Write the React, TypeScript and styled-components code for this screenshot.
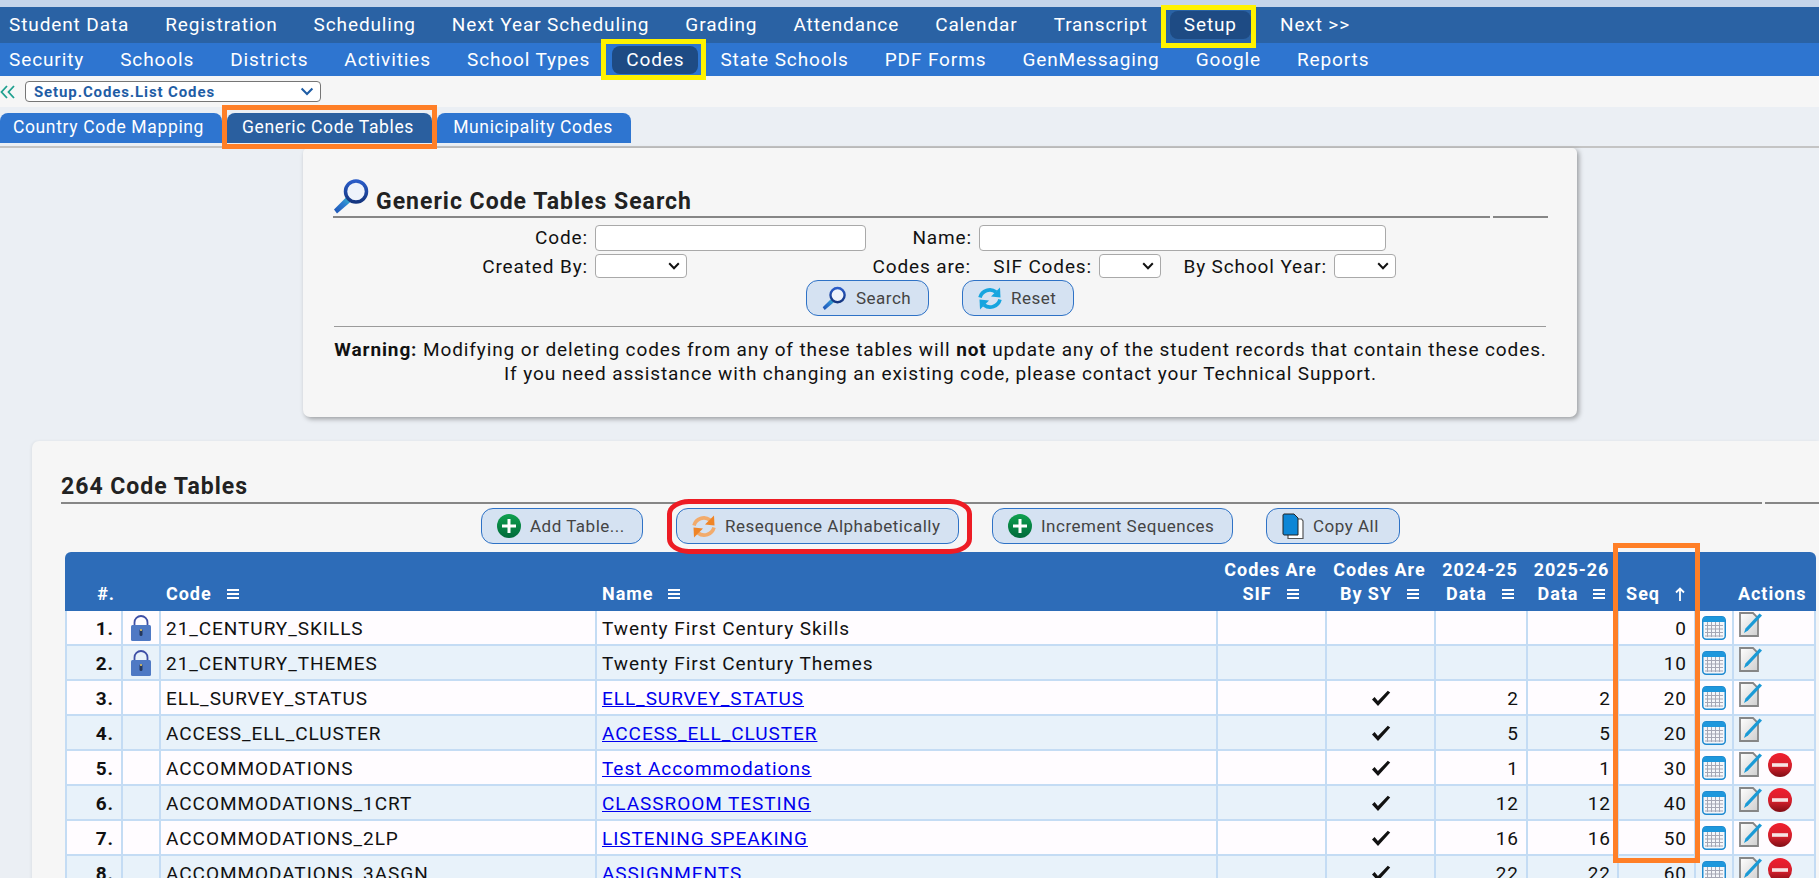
import React from "react";
import styled, { createGlobalStyle } from "styled-components";

const Global = createGlobalStyle`
  html, body { margin: 0; padding: 0; height: 100%; overflow: hidden; background: #ebeff4; }
  body { font-family: Roboto, "Liberation Sans", sans-serif; color: #111; }
  * { box-sizing: border-box; }
  td svg { vertical-align: middle; }
`;

const Page = styled.div`
  position: relative;
  width: 1819px;
  height: 878px;
  overflow: hidden;
  background: #ebeff4;
`;

const TopStrip = styled.div`
  height: 7px;
  background: #c5d5ea;
`;

const NavBar = styled.nav<{ $sub?: boolean }>`
  display: flex;
  align-items: center;
  height: ${(p) => (p.$sub ? 33 : 36)}px;
  padding-left: 9px;
  gap: 8px;
  background: ${(p) => (p.$sub ? "#2e75d0" : "#2a62a4")};
`;

const NavItem = styled.a<{ $active?: boolean; $ml?: number }>`
  display: block;
  margin-left: ${(p) => p.$ml ?? 0}px;
  padding: 0 14px;
  height: 28px;
  line-height: 28px;
  font-size: 19px;
  letter-spacing: 0.89px;
  color: #fff;
  border-radius: 8px;
  background: ${(p) => (p.$active ? "#1e4b84" : "transparent")};
  &:first-child { padding-left: 0; }
`;

const CrumbBar = styled.div`
  display: flex;
  align-items: center;
  height: 31px;
  background: #f6f6f6;
`;

const BackMark = styled.svg`
  width: 16px;
  height: 14px;
  margin-right: 9px;
  flex: none;
`;

const CrumbSelect = styled.div`
  display: flex;
  align-items: center;
  justify-content: space-between;
  width: 296px;
  height: 21px;
  padding: 0 6px 0 8px;
  border: 1px solid #767676;
  border-radius: 4px;
  background: #fff;
  color: #1f5da5;
  font-size: 15px;
  font-weight: 700;
  letter-spacing: 0.88px;
`;

const TabStrip = styled.div`
  display: flex;
  align-items: flex-end;
  gap: 5px;
  height: 41px;
  padding: 6px 0 0;
  border-bottom: 2px solid #c4c4c4;
  & > div { margin-bottom: 3px; }
`;

const Tab = styled.div<{ $active?: boolean; $w: number; $pr: number }>`
  width: ${(p) => p.$w}px;
  height: 30px;
  padding-right: ${(p) => p.$pr}px;
  line-height: 29px;
  text-align: center;
  font-size: 17.5px;
  letter-spacing: 0.65px;
  color: #fff;
  border-radius: 8px 8px 0 0;
  background: ${(p) => (p.$active ? "#2a5f9f" : "#2e75d0")};
`;

const SearchCard = styled.section`
  width: 1274px;
  height: 269px;
  margin-left: 303px;
  padding: 31px 29px 0 30px;
  background: #f6f6f6;
  border-radius: 5px 5px 7px 7px;
  box-shadow: 2px 2px 5px rgba(0, 0, 0, 0.35);
`;

const TitleRow = styled.div`
  display: flex;
  align-items: flex-end;
  gap: 6px;
  height: 37px;
  padding-bottom: 1px;
`;

const SectionTitle = styled.h2`
  margin: 0;
  font-size: 23px;
  line-height: 27px;
  font-weight: 700;
  letter-spacing: 1px;
  color: #222;
`;

const SplitRule = styled.div`
  display: flex;
  gap: 3px;
  height: 2px;
  & > i { display: block; flex: none; height: 2px; background: #868686; }
`;

const FormRow = styled.div<{ $h: number; $mt?: number; $mb?: number }>`
  display: flex;
  align-items: center;
  height: ${(p) => p.$h}px;
  margin-top: ${(p) => p.$mt ?? 0}px;
  margin-bottom: ${(p) => p.$mb ?? 0}px;
  font-size: 19px;
  letter-spacing: 0.87px;
  color: #111;
`;

const Label = styled.label<{ $w: number }>`
  display: block;
  flex: none;
  width: ${(p) => p.$w}px;
  margin-right: 7px;
  text-align: right;
  white-space: nowrap;
`;

const TextInput = styled.div<{ $w: number }>`
  flex: none;
  width: ${(p) => p.$w}px;
  height: 26px;
  border: 1px solid #a9a9a9;
  border-radius: 4px;
  background: #fff;
`;

const SmallSelect = styled.div<{ $w: number }>`
  display: flex;
  flex: none;
  align-items: center;
  justify-content: flex-end;
  width: ${(p) => p.$w}px;
  height: 24px;
  padding-right: 6px;
  border: 1px solid #a9a9a9;
  border-radius: 4px;
  background: #fff;
`;

const ButtonRow = styled.div<{ $pl?: number; $center?: boolean }>`
  display: flex;
  gap: 33px;
  height: 36px;
  padding-left: ${(p) => p.$pl ?? 0}px;
  ${(p) => (p.$center ? "justify-content: center;" : "")}
`;

const Btn = styled.button<{ $w: number }>`
  display: flex;
  flex: none;
  align-items: center;
  gap: 9px;
  width: ${(p) => p.$w}px;
  height: 36px;
  padding: 0 0 0 15px;
  border: 1px solid #2e72c6;
  border-radius: 12px;
  background: #d5e2f2;
  color: #444;
  font-family: Roboto, "Liberation Sans", sans-serif;
  font-size: 17px;
  letter-spacing: 0.5px;
  white-space: nowrap;
`;

const ThinRule = styled.div`
  height: 1px;
  margin: 10px 2px 0 1px;
  background: #9b9b9b;
`;

const Warning = styled.p`
  margin: 11px 0 0;
  font-size: 19px;
  line-height: 24px;
  letter-spacing: 0.89px;
  text-align: center;
  color: #111;
  white-space: nowrap;
`;

const TableCard = styled.section`
  width: 1787px;
  height: 600px;
  margin: 24px 0 0 32px;
  padding: 31px 0 0 29px;
  background: #f6f6f6;
  border-radius: 7px 0 0 0;
  box-shadow: -1px 0 3px rgba(0, 0, 0, 0.06);
`;

const CountTitle = styled(SectionTitle)`
  height: 30px;
  line-height: 30px;
`;

const ToolbarWrap = styled.div`
  margin: 4px 0 8px 4px;
  width: 1751px;
`;

const Table = styled.table`
  width: 1751px;
  margin-left: 4px;
  table-layout: fixed;
  border-collapse: separate;
  border-spacing: 0;
`;

const HeadCell = styled.th<{ $align?: string }>`
  height: 59px;
  padding: 0 0 5px;
  vertical-align: bottom;
  background: #2d6cb8;
  color: #fff;
  font-size: 18px;
  line-height: 24px;
  font-weight: 700;
  letter-spacing: 0.95px;
  text-align: ${(p) => p.$align ?? "center"};
  white-space: nowrap;
  &:first-child { border-top-left-radius: 6px; }
  &:last-child { border-top-right-radius: 6px; }
`;

const HeadLabel = styled.span<{ $pl?: number; $pr?: number }>`
  display: inline-flex;
  align-items: center;
  gap: 15px;
  padding-left: ${(p) => p.$pl ?? 0}px;
  padding-right: ${(p) => p.$pr ?? 0}px;
`;

const Row = styled.tr<{ $even: boolean }>`
  background: ${(p) => (p.$even ? "#e8f2fa" : "#fffcff")};
`;

const Cell = styled.td<{ $align?: string; $bold?: boolean; $pl?: number; $pr?: number }>`
  height: 35px;
  padding: 2px ${(p) => p.$pr ?? 0}px 0 ${(p) => p.$pl ?? 0}px;
  border-left: 2px solid #c4dcf4;
  border-bottom: 2px solid #c4dcf4;
  font-size: 19px;
  letter-spacing: 0.95px;
  color: #111;
  font-weight: ${(p) => (p.$bold ? 700 : 400)};
  text-align: ${(p) => p.$align ?? "left"};
  white-space: nowrap;
  overflow: hidden;
  &:last-child { border-right: 2px solid #c4dcf4; }
`;

const IconCell = styled(Cell)`
  padding-top: 0;
`;

const CodeLink = styled.a`
  color: #0000ee;
  text-decoration: underline;
`;

const IconRow = styled.span`
  display: flex;
  align-items: center;
  gap: 5px;
  margin-bottom: 6px;
`;

const Marker = styled.div<{ $x: number; $y: number; $w: number; $h: number; $c: string; $r?: string }>`
  position: absolute;
  left: ${(p) => p.$x}px;
  top: ${(p) => p.$y}px;
  width: ${(p) => p.$w}px;
  height: ${(p) => p.$h}px;
  border: 5px solid ${(p) => p.$c};
  border-radius: ${(p) => p.$r ?? "0"};
  pointer-events: none;
`;

const Chevron = ({ w = 12 }: { w?: number }) => (
  <svg width={w} height="8" viewBox="0 0 12 8" fill="none">
    <path d="M1.2 1.3 6 6.2l4.8-4.9" stroke="#111" strokeWidth="2" />
  </svg>
);

const Magnifier = ({ size }: { size: number }) => (
  <svg width={size} height={size} viewBox="0 0 37 36" fill="none">
    <defs>
      <linearGradient id="mh" x1="0" y1="1" x2="1" y2="0">
        <stop offset="0" stopColor="#1d50b4" />
        <stop offset="0.6" stopColor="#2c7fd0" />
        <stop offset="1" stopColor="#35c0c8" />
      </linearGradient>
      <linearGradient id="mr" x1="0" y1="0" x2="0" y2="1">
        <stop offset="0" stopColor="#2a5cc8" />
        <stop offset="1" stopColor="#14357f" />
      </linearGradient>
    </defs>
    <path d="M1 31 13 19l5 4L4 35z" fill="url(#mh)" />
    <circle cx="23" cy="13" r="10.500" fill="#eef3fb" stroke="url(#mr)" strokeWidth="3.500" />
  </svg>
);

const Refresh = ({ c1, c2 }: { c1: string; c2: string }) => (
  <svg width="24" height="25" viewBox="0 0 24 25" fill="none">
    <path d="M2 11.500A10.200 10.200 0 0 1 18 6" stroke={c2} strokeWidth="3.600" />
    <path d="M22 1.500 22.500 11.500 13 10.500z" fill={c1} />
    <path d="M22 13.500A10.200 10.200 0 0 1 6 19" stroke={c2} strokeWidth="3.600" />
    <path d="M2 23.500 1.500 13.500 11 14.500z" fill={c1} />
  </svg>
);

const Plus = () => (
  <svg width="24" height="24" viewBox="0 0 24 24">
    <defs>
      <linearGradient id="pg" x1="0" y1="0" x2="0" y2="1">
        <stop offset="0" stopColor="#0fa04f" />
        <stop offset="1" stopColor="#006a3a" />
      </linearGradient>
    </defs>
    <circle cx="12" cy="12" r="12" fill="url(#pg)" />
    <path d="M10.500 5h3v5.500H19v3h-5.500V19h-3v-5.500H5v-3h5.500z" fill="#fff" />
  </svg>
);

const CopyIcon = () => (
  <svg width="22" height="27" viewBox="0 0 22 27" fill="none">
    <path d="M6 6h13.500l1.500 2v17.500H6z" fill="#fff" stroke="#555" strokeWidth="1.200" />
    <path d="M2 1h10l4 4v17H2a1.500 1.500 0 0 1-1-1V2a1.500 1.500 0 0 1 1-1z" fill="#0d86d6" stroke="#222" strokeWidth="1" />
  </svg>
);

const Lock = () => (
  <svg width="20" height="26" viewBox="0 0 20 26" fill="none">
    <path d="M3.500 12V7.500a6.500 6.500 0 0 1 13 0V12" stroke="#3e4fa6" strokeWidth="1.800" />
    <rect x="0" y="10" width="20" height="16" rx="1.500" fill="#4f79c4" />
    <rect x="8.500" y="14" width="3" height="7" rx="1.500" fill="#24385e" />
    <circle cx="10" cy="15" r="1.100" fill="#e3c667" />
  </svg>
);

const CalendarIcon = () => (
  <svg width="24" height="24" viewBox="0 0 24 24" fill="none">
    <rect x="0.750" y="0.750" width="22.500" height="22.500" rx="3.500" fill="#f4f6fa" stroke="#1e8ad0" strokeWidth="1.500" />
    <path d="M1 4a3 3 0 0 1 3-3h16a3 3 0 0 1 3 3v2H1z" fill="#1d97dc" />
    <path d="M5.500 6v15M9.500 6v15M13.500 6v15M17.500 6v15M3 9.500h18M3 13h18M3 16.500h18M3 20h18" stroke="#a5a7b5" strokeWidth="1" />
  </svg>
);

const EditIcon = () => (
  <svg width="24" height="25" viewBox="0 0 24 25" fill="none">
    <defs>
      <linearGradient id="eg" x1="0" y1="0" x2="1" y2="1">
        <stop offset="0" stopColor="#fff" />
        <stop offset="1" stopColor="#cfcfcf" />
      </linearGradient>
    </defs>
    <path d="M1 1h13l5 5v18H1z" fill="url(#eg)" stroke="#868686" strokeWidth="1.800" />
    <path d="M5 21 6.500 16.500 20.500 1.500l2.500 2L9 18.500z" fill="#1a9ad6" />
  </svg>
);

const DeleteIcon = () => (
  <svg width="24" height="24" viewBox="0 0 24 24">
    <defs>
      <linearGradient id="dg" x1="0" y1="0" x2="0" y2="1">
        <stop offset="0" stopColor="#f01f2e" />
        <stop offset="0.55" stopColor="#d5202c" />
        <stop offset="1" stopColor="#7f0d14" />
      </linearGradient>
    </defs>
    <circle cx="12" cy="12" r="12" fill="url(#dg)" />
    <rect x="4" y="10.200" width="16" height="3.600" fill="#f6e4e4" />
  </svg>
);

const CheckMark = () => (
  <svg width="20" height="17" viewBox="0 0 20 17">
    <path d="M1 9.500 3.600 7l3.300 4L16.800 0.800 19.200 2.500 7 16z" fill="#111" />
  </svg>
);

const MenuGlyph = () => (
  <svg width="12" height="12" viewBox="0 0 12 12">
    <path d="M0 1h12v2H0zM0 5h12v2H0zM0 9h12v2H0z" fill="#fff" />
  </svg>
);

const UpArrow = () => (
  <svg width="10" height="14" viewBox="0 0 10 14" fill="none">
    <path d="M5 14V1.500M1 5.500 5 1.500l4 4" stroke="#fff" strokeWidth="1.800" />
  </svg>
);

const main = ["Student Data", "Registration", "Scheduling", "Next Year Scheduling", "Grading", "Attendance", "Calendar", "Transcript", "Setup", "Next >>"];
const sub = ["Security", "Schools", "Districts", "Activities", "School Types", "Codes", "State Schools", "PDF Forms", "GenMessaging", "Google", "Reports"];
const widths = [56, 38, 436, 621, 109, 109, 92, 91, 77, 38, 84];

type R = { code: string; name: string; link?: boolean; check?: boolean; a?: number; b?: number; seq: number; lock?: boolean; del?: boolean };
const rows: R[] = [
  { code: "21_CENTURY_SKILLS", name: "Twenty First Century Skills", seq: 0, lock: true },
  { code: "21_CENTURY_THEMES", name: "Twenty First Century Themes", seq: 10, lock: true },
  { code: "ELL_SURVEY_STATUS", name: "ELL_SURVEY_STATUS", link: true, check: true, a: 2, b: 2, seq: 20 },
  { code: "ACCESS_ELL_CLUSTER", name: "ACCESS_ELL_CLUSTER", link: true, check: true, a: 5, b: 5, seq: 20 },
  { code: "ACCOMMODATIONS", name: "Test Accommodations", link: true, check: true, a: 1, b: 1, seq: 30, del: true },
  { code: "ACCOMMODATIONS_1CRT", name: "CLASSROOM TESTING", link: true, check: true, a: 12, b: 12, seq: 40, del: true },
  { code: "ACCOMMODATIONS_2LP", name: "LISTENING SPEAKING", link: true, check: true, a: 16, b: 16, seq: 50, del: true },
  { code: "ACCOMMODATIONS_3ASGN", name: "ASSIGNMENTS", link: true, check: true, a: 22, b: 22, seq: 60, del: true },
];

export default function App() {
  return (
    <Page>
      <Global />
      <TopStrip />
      <NavBar>
        {main.map((m) => (
          <NavItem key={m} $active={m === "Setup"} $ml={m === "Next >>" ? 7 : 0}>{m}</NavItem>
        ))}
      </NavBar>
      <NavBar $sub>
        {sub.map((m) => (
          <NavItem key={m} $active={m === "Codes"}>{m}</NavItem>
        ))}
      </NavBar>
      <CrumbBar>
        <BackMark viewBox="0 0 16 14" fill="none">
          <path d="M7 1 1.500 7 7 13M14 1 8.500 7 14 13" stroke="#1fa08f" strokeWidth="1.800" />
        </BackMark>
        <CrumbSelect>
          Setup.Codes.List Codes
          <svg width="14" height="9" viewBox="0 0 12 8" fill="none">
            <path d="M1.200 1.300 6 6.200l4.800-4.900" stroke="#1f5da5" strokeWidth="1.800" />
          </svg>
        </CrumbSelect>
      </CrumbBar>
      <TabStrip>
        <Tab $w={222} $pr={5}>Country Code Mapping</Tab>
        <Tab $w={205} $pr={3} $active>Generic Code Tables</Tab>
        <Tab $w={194} $pr={2}>Municipality Codes</Tab>
      </TabStrip>

      <SearchCard>
        <TitleRow>
          <Magnifier size={37} />
          <SectionTitle>Generic Code Tables Search</SectionTitle>
        </TitleRow>
        <SplitRule>
          <i style={{ width: 1157 }} />
          <i style={{ width: 55 }} />
        </SplitRule>
        <FormRow $h={33} $mt={3}>
          <Label $w={255}>Code:</Label>
          <TextInput $w={271} />
          <Label $w={106}>Name:</Label>
          <TextInput $w={407} />
        </FormRow>
        <FormRow $h={24} $mb={2}>
          <Label $w={255}>Created By:</Label>
          <SmallSelect $w={92}><Chevron /></SmallSelect>
          <Label $w={284}>Codes are:</Label>
          <Label $w={114}>SIF Codes:</Label>
          <SmallSelect $w={62}><Chevron /></SmallSelect>
          <Label $w={166}>By School Year:</Label>
          <SmallSelect $w={62}><Chevron /></SmallSelect>
        </FormRow>
        <ButtonRow $pl={473}>
          <Btn $w={123}><Magnifier size={25} />Search</Btn>
          <Btn $w={112}><Refresh c1="#16a5df" c2="#16a5df" />Reset</Btn>
        </ButtonRow>
        <ThinRule />
        <Warning>
          <b>Warning:</b> Modifying or deleting codes from any of these tables will <b>not</b> update any of the student records that contain these codes.
          <br />
          If you need assistance with changing an existing code, please contact your Technical Support.
        </Warning>
      </SearchCard>

      <TableCard>
        <CountTitle>264 Code Tables</CountTitle>
        <SplitRule>
          <i style={{ width: 1701 }} />
          <i style={{ width: 60 }} />
        </SplitRule>
        <ToolbarWrap>
          <ButtonRow $center>
            <Btn $w={162}><Plus />Add Table...</Btn>
            <Btn $w={283}><Refresh c1="#ef8427" c2="#f2ab6c" />Resequence Alphabetically</Btn>
            <Btn $w={241}><Plus />Increment Sequences</Btn>
            <Btn $w={134}><CopyIcon />Copy All</Btn>
          </ButtonRow>
        </ToolbarWrap>
        <Table>
          <colgroup>
            {widths.map((w, i) => <col key={i} style={{ width: w }} />)}
          </colgroup>
          <thead>
            <tr>
              <HeadCell $align="right"><HeadLabel $pr={6}>#.</HeadLabel></HeadCell>
              <HeadCell />
              <HeadCell $align="left"><HeadLabel $pl={7}>Code<MenuGlyph /></HeadLabel></HeadCell>
              <HeadCell $align="left"><HeadLabel $pl={7}>Name<MenuGlyph /></HeadLabel></HeadCell>
              <HeadCell>Codes Are<br /><HeadLabel>SIF<MenuGlyph /></HeadLabel></HeadCell>
              <HeadCell>Codes Are<br /><HeadLabel>By SY<MenuGlyph /></HeadLabel></HeadCell>
              <HeadCell>2024-25<br /><HeadLabel>Data<MenuGlyph /></HeadLabel></HeadCell>
              <HeadCell>2025-26<br /><HeadLabel>Data<MenuGlyph /></HeadLabel></HeadCell>
              <HeadCell><HeadLabel>Seq<UpArrow /></HeadLabel></HeadCell>
              <HeadCell />
              <HeadCell $align="left"><HeadLabel $pl={6}>Actions</HeadLabel></HeadCell>
            </tr>
          </thead>
          <tbody>
            {rows.map((r, i) => (
              <Row key={r.code} $even={i % 2 === 1}>
                <Cell $align="right" $bold $pr={7}>{i + 1}.</Cell>
                <IconCell $align="center">{r.lock && <Lock />}</IconCell>
                <Cell $pl={5}>{r.code}</Cell>
                <Cell $pl={5}>{r.link ? <CodeLink>{r.name}</CodeLink> : r.name}</Cell>
                <Cell />
                <IconCell $align="center">{r.check && <CheckMark />}</IconCell>
                <Cell $align="right" $pr={7}>{r.a}</Cell>
                <Cell $align="right" $pr={6}>{r.b}</Cell>
                <Cell $align="right" $pr={7}>{r.seq}</Cell>
                <IconCell $pl={6}><CalendarIcon /></IconCell>
                <IconCell $pl={5}>
                  <IconRow>
                    <EditIcon />
                    {r.del && <DeleteIcon />}
                  </IconRow>
                </IconCell>
              </Row>
            ))}
          </tbody>
        </Table>
      </TableCard>

      <Marker $x={1161} $y={5} $w={95} $h={43} $c="#fff200" />
      <Marker $x={601} $y={39} $w={105} $h={41} $c="#fff200" />
      <Marker $x={222} $y={105} $w={215} $h={44} $c="#ff7f27" />
      <Marker $x={667} $y={499} $w={305} $h={55} $c="#ed1c24" $r="22px / 15px" />
      <Marker $x={1613} $y={543} $w={87} $h={320} $c="#ff7f27" />
    </Page>
  );
}
